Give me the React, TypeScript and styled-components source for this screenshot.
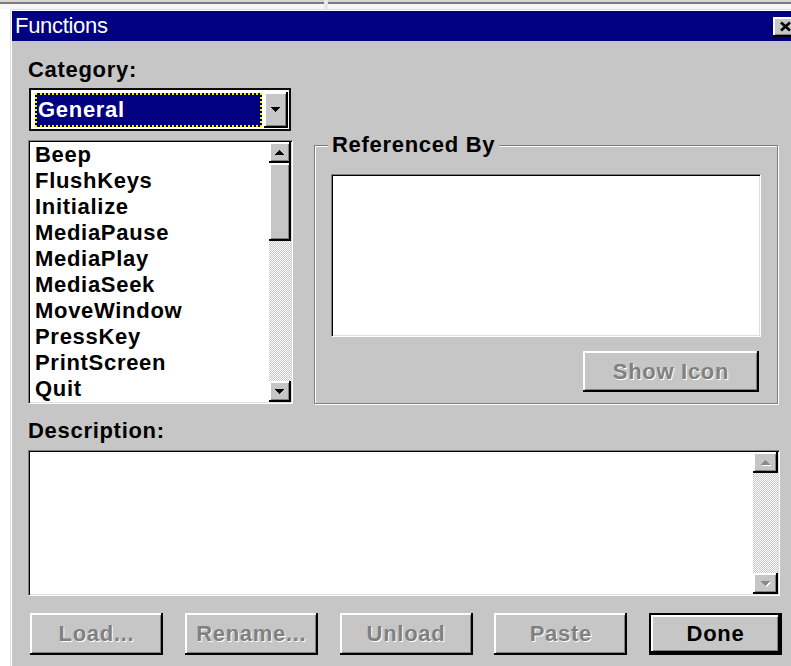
import React from "react";
import styled, { createGlobalStyle, css } from "styled-components";

const FACE = "#c6c6c6";

const GlobalStyle = createGlobalStyle`
  html, body {
    margin: 0;
    padding: 0;
    background: #ffffff;
    overflow: hidden;
  }
  body {
    font-family: "Liberation Sans", Arial, sans-serif;
  }
`;

/* 3D edges shared by the classic widgets */
const raised = css`
  background: ${FACE};
  box-shadow: inset -2px -2px 0 #000000, inset 2px 2px 0 #ffffff,
    inset -3px -3px 0 #808080;
`;

const sunken = css`
  border: 1px solid;
  border-color: #808080 #ffffff #ffffff #808080;
  box-shadow: inset 1px 1px 0 #000000, inset -1px -1px 0 #dfdfdf;
  padding: 1px;
  background: #ffffff;
`;

const dither = css`
  background: repeating-conic-gradient(#c6c6c6 0 25%, #ffffff 0 50%) 0 0 / 2px
    2px;
`;

const Screen = styled.div`
  width: 791px;
  height: 666px;
  overflow: hidden;
  background: #ffffff;
  display: flex;
  flex-direction: column;
`;

const BackWindowEdge = styled.div`
  flex: none;
  height: 9px;
  display: flex;
  background: linear-gradient(#d6d6d6 0 2px, #7c7c7c 2px 4px, #f6f6f6 4px);
`;

const EdgeDivider = styled.div`
  margin-left: 324px;
  width: 4px;
  background: #e8e8e8;
`;

const Dialog = styled.div`
  flex: none;
  margin-left: 10px;
  width: 790px;
  background: ${FACE};
  border-top: 1px solid #dfdfdf;
  border-left: 1px solid #dfdfdf;
  box-shadow: inset 1px 1px 0 #ffffff;
  padding: 1px 0 0 1px;
  display: flex;
  flex-direction: column;
`;

const TitleBar = styled.div`
  height: 30px;
  background: #000080;
  display: flex;
  align-items: center;
  padding: 0 5px 0 3px;
`;

const TitleText = styled.div`
  flex: 1;
  color: #ffffff;
  font-size: 22px;
  line-height: 30px;
  letter-spacing: -0.3px;
`;

const CloseButton = styled.div`
  ${raised};
  width: 24px;
  height: 20px;
  display: flex;
  align-items: center;
  justify-content: center;
  margin-top: 1px;
`;

const Body = styled.div`
  padding: 17px 16px 11px 16px;
  display: flex;
  flex-direction: column;
`;

const textFace = css`
  font-family: "Liberation Sans", Arial, sans-serif;
  font-weight: bold;
  font-size: 22px;
  letter-spacing: 0.7px;
`;

const FieldLabel = styled.div<{ $gap?: number }>`
  ${textFace};
  line-height: 24px;
  color: #000000;
  margin-top: ${(p) => p.$gap ?? 0}px;
`;

const ComboBox = styled.div`
  margin-top: 6px;
  margin-left: 1px;
  width: 262px;
  height: 43px;
  box-sizing: border-box;
  border: 2px solid #0c0c0c;
  background: #ffffff;
  display: flex;
  align-items: center;
  padding: 0 1px 0 4px;
  gap: 2px;
`;

const FocusBox = styled.div`
  width: 227px;
  height: 34px;
  box-sizing: border-box;
  border: 2px dotted #f2f200;
  background: linear-gradient(#000080, #000080) padding-box,
    linear-gradient(#000000, #000000) border-box;
  ${textFace};
  color: #ffffff;
  line-height: 30px;
  padding-left: 1px;
`;

const DropButton = styled.div`
  ${raised};
  width: 24px;
  height: 36px;
  display: flex;
  align-items: center;
  justify-content: center;
`;

const MainRow = styled.div`
  margin-top: 9px;
  display: flex;
  align-items: flex-start;
  gap: 21px;
`;

const ListBox = styled.div`
  ${sunken};
  width: 265px;
  height: 264px;
  box-sizing: border-box;
  display: flex;
`;

const ListItems = styled.div`
  flex: 1;
  padding-left: 5px;
  overflow: hidden;
`;

const ListItem = styled.div`
  ${textFace};
  line-height: 26px;
  color: #000000;
  white-space: nowrap;
`;

const ScrollBar = styled.div<{ $width: number }>`
  width: ${(p) => p.$width}px;
  flex: none;
  display: flex;
  flex-direction: column;
`;

const ScrollButton = styled.div`
  ${raised};
  height: 21px;
  flex: none;
  display: flex;
  align-items: center;
  justify-content: center;
`;

const ScrollThumb = styled.div<{ $height: number }>`
  ${raised};
  height: ${(p) => p.$height}px;
  flex: none;
`;

const ScrollTrack = styled.div`
  flex: 1;
  ${dither};
`;

const GroupBox = styled.div`
  position: relative;
  margin-top: 5px;
  width: 464px;
  box-sizing: border-box;
  border: 1px solid #808080;
  box-shadow: inset 1px 1px 0 #ffffff, 1px 1px 0 #ffffff;
  padding: 28px 16px 11px 16px;
  display: flex;
  flex-direction: column;
`;

const GroupCaption = styled.div`
  position: absolute;
  top: -13px;
  left: 13px;
  padding: 0 4px;
  background: ${FACE};
  ${textFace};
  line-height: 24px;
  color: #000000;
`;

const RefList = styled.div`
  ${sunken};
  height: 163px;
  box-sizing: border-box;
`;

const PushButton = styled.div<{
  $width: number;
  $muted?: boolean;
  $primary?: boolean;
}>`
  ${raised};
  width: ${(p) => p.$width}px;
  height: ${(p) => (p.$primary ? 42 : 42)}px;
  box-sizing: border-box;
  flex: none;
  display: flex;
  align-items: center;
  justify-content: center;
  ${textFace};
  line-height: 24px;
  color: ${(p) => (p.$muted ? "#808080" : "#000000")};
  text-shadow: ${(p) => (p.$muted ? "1px 1px 0 #ffffff" : "none")};
  ${(p) =>
    p.$primary &&
    css`
      border: 2px solid #000000;
    `}
`;

const ShowIconButton = styled(PushButton)`
  align-self: flex-end;
  margin: 14px 2px 0 0;
  height: 41px;
`;

const DescriptionBox = styled.div`
  ${sunken};
  margin-top: 7px;
  width: 752px;
  height: 146px;
  box-sizing: border-box;
  display: flex;
`;

const DescriptionText = styled.div`
  flex: 1;
`;

const ButtonRow = styled.div`
  margin: 17px 0 0 2px;
  width: 752px;
  display: flex;
  justify-content: space-between;
`;

type ArrowProps = { dir: "up" | "down"; muted?: boolean };

const Arrow = ({ dir, muted }: ArrowProps) => {
  const pts = dir === "up" ? "4.5,0 9,5 0,5" : "0,0 9,0 4.5,5";
  return (
    <svg width="10" height="6" viewBox="0 0 10 6" shapeRendering="crispEdges">
      {muted && (
        <polygon points={pts} fill="#ffffff" transform="translate(1 1)" />
      )}
      <polygon points={pts} fill={muted ? "#8a8a8a" : "#000000"} />
    </svg>
  );
};

const CloseGlyph = () => (
  <svg width="13" height="11" viewBox="0 0 13 11">
    <path
      d="M2 1.5 L11 9.5 M11 1.5 L2 9.5"
      stroke="#000000"
      strokeWidth="2.6"
      fill="none"
    />
  </svg>
);

const functionNames = [
  "Beep",
  "FlushKeys",
  "Initialize",
  "MediaPause",
  "MediaPlay",
  "MediaSeek",
  "MoveWindow",
  "PressKey",
  "PrintScreen",
  "Quit",
];

const actions: { label: string; muted: boolean; primary?: boolean }[] = [
  { label: "Load...", muted: true },
  { label: "Rename...", muted: true },
  { label: "Unload", muted: true },
  { label: "Paste", muted: true },
  { label: "Done", muted: false, primary: true },
];

export default function App() {
  return (
    <Screen>
      <GlobalStyle />
      <BackWindowEdge>
        <EdgeDivider />
      </BackWindowEdge>
      <Dialog>
        <TitleBar>
          <TitleText>Functions</TitleText>
          <CloseButton>
            <CloseGlyph />
          </CloseButton>
        </TitleBar>
        <Body>
          <FieldLabel>Category:</FieldLabel>
          <ComboBox>
            <FocusBox>General</FocusBox>
            <DropButton>
              <Arrow dir="down" />
            </DropButton>
          </ComboBox>

          <MainRow>
            <ListBox>
              <ListItems>
                {functionNames.map((name) => (
                  <ListItem key={name}>{name}</ListItem>
                ))}
              </ListItems>
              <ScrollBar $width={22}>
                <ScrollButton>
                  <Arrow dir="up" />
                </ScrollButton>
                <ScrollThumb $height={78} />
                <ScrollTrack />
                <ScrollButton>
                  <Arrow dir="down" />
                </ScrollButton>
              </ScrollBar>
            </ListBox>

            <GroupBox>
              <GroupCaption>Referenced By</GroupCaption>
              <RefList />
              <ShowIconButton $width={176} $muted>
                Show Icon
              </ShowIconButton>
            </GroupBox>
          </MainRow>

          <FieldLabel $gap={15}>Description:</FieldLabel>
          <DescriptionBox>
            <DescriptionText />
            <ScrollBar $width={25}>
              <ScrollButton>
                <Arrow dir="up" muted />
              </ScrollButton>
              <ScrollTrack />
              <ScrollButton>
                <Arrow dir="down" muted />
              </ScrollButton>
            </ScrollBar>
          </DescriptionBox>

          <ButtonRow>
            {actions.map((a) => (
              <PushButton
                key={a.label}
                $width={133}
                $muted={a.muted}
                $primary={a.primary}
              >
                {a.label}
              </PushButton>
            ))}
          </ButtonRow>
        </Body>
      </Dialog>
    </Screen>
  );
}
